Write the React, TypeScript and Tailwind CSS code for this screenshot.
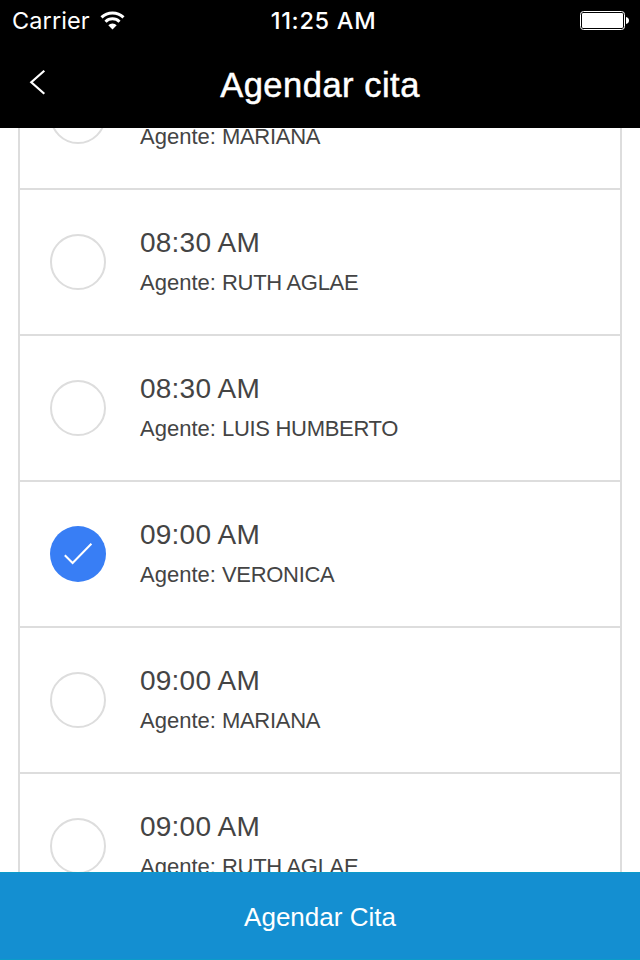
const slots = [
  { time: '08:30 AM', agent: 'MARIANA' },
  { time: '08:30 AM', agent: 'RUTH AGLAE' },
  { time: '08:30 AM', agent: 'LUIS HUMBERTO' },
  { time: '09:00 AM', agent: 'VERONICA', selected: true },
  { time: '09:00 AM', agent: 'MARIANA' },
  { time: '09:00 AM', agent: 'RUTH AGLAE' },
]

function WifiIcon() {
  return (
    <svg className="mb-0.5" width="25" height="19" viewBox="0 0 25 19" fill="none" stroke="white" strokeWidth="3">
      <path d="M1.500 6.400a15.800 15.800 0 0 1 22 0" />
      <path d="M5.500 10.700a10 10 0 0 1 14 0" />
      <path d="M12.500 18.500l-4.200-4.300a5.900 5.900 0 0 1 8.400 0z" fill="white" stroke="none" />
    </svg>
  )
}

function BatteryIcon() {
  return (
    <svg width="50" height="20" viewBox="0 0 50 20">
      <rect x="0.5" y="0.5" width="44" height="18" rx="3" fill="none" stroke="white" />
      <rect x="2" y="2" width="41" height="15" rx="1.2" fill="white" />
      <path d="M46 6c2 .3 3 1.600 3 3.500s-1 3.200-3 3.500z" fill="white" />
    </svg>
  )
}

function StatusBar() {
  return (
    <div className="grid h-10 grid-cols-[1fr_auto_1fr] items-center pt-px pl-3 pr-2.5 font-['Inter',sans-serif] text-[23.5px] leading-10 text-white">
      <div className="flex items-center gap-2.5">
        <span className="tracking-[0.1px]">Carrier</span>
        <WifiIcon />
      </div>
      <span className="pl-[5px] font-medium tracking-[0.7px]">11:25 AM</span>
      <div className="flex justify-end">
        <BatteryIcon />
      </div>
    </div>
  )
}

function Header() {
  return (
    <header className="h-32 shrink-0 bg-black">
      <StatusBar />
      <div className="grid h-[88px] grid-cols-[1fr_auto_1fr] items-center px-7 text-white">
        <button aria-label="Atrás" className="justify-self-start">
          <svg width="20" height="28" viewBox="0 0 20 28" fill="none" stroke="white" strokeWidth="2.2">
            <path d="M16.300 0.800L3.300 12.300L16.300 23.800" />
          </svg>
        </button>
        <h1 className="pt-0.5 text-[34.5px] leading-10 tracking-[0.5px] [-webkit-text-stroke:0.5px_white]">Agendar cita</h1>
      </div>
    </header>
  )
}

function Radio({ selected }: { selected?: boolean }) {
  if (!selected) {
    return <span className="size-14 rounded-full border-2 border-[#ddd]" />
  }
  return (
    <span className="size-14 rounded-full bg-[#387ef5]">
      <svg width="56" height="56" viewBox="0 0 56 56" fill="none" stroke="white" strokeWidth="2">
        <path d="M14.800 29.200L22.600 37L41.400 17.800" />
      </svg>
    </span>
  )
}

export default function App() {
  return (
    <div className="flex h-[960px] w-[640px] flex-col overflow-hidden bg-white font-['Liberation_Sans',Arial,sans-serif]">
      <Header />

      <main className="min-h-0 flex-1 overflow-hidden px-[18px]">
        <ul className="-mt-[84px] border-x-2 border-[#ddd]">
          {slots.map((slot, i) => (
            <li key={i} className="flex h-[146px] items-center gap-[34px] border-b-2 border-[#ddd] pl-[30px] text-[#444]">
              <Radio selected={slot.selected} />
              <div className="pt-0.5 leading-10">
                <h2 className="text-[28px] tracking-[0.22px]">{slot.time}</h2>
                <p className="text-[22px]">
                  Agente: <span className="tracking-[-0.3px]">{slot.agent}</span>
                </p>
              </div>
            </li>
          ))}
        </ul>
      </main>

      <button className="h-[88px] shrink-0 border-y border-[#0c9bc9] bg-[#148fd1] pt-0.5 text-[26px] text-white">
        Agendar Cita
      </button>
    </div>
  )
}
